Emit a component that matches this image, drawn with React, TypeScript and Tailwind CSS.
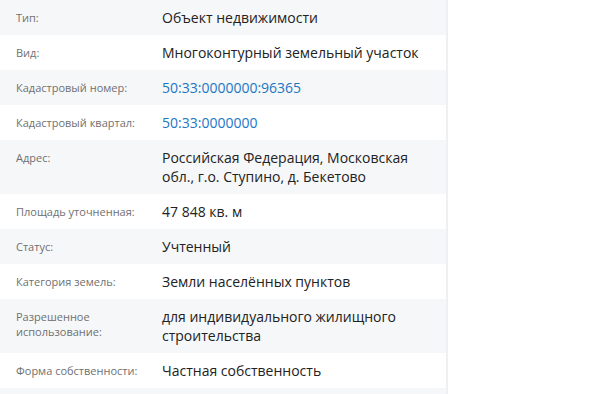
type Row = {
  label: string;
  value: string;
  link?: boolean;
};

const rows: Row[] = [
  { label: 'Тип:', value: 'Объект недвижимости' },
  { label: 'Вид:', value: 'Многоконтурный земельный участок' },
  { label: 'Кадастровый номер:', value: '50:33:0000000:96365', link: true },
  { label: 'Кадастровый квартал:', value: '50:33:0000000', link: true },
  { label: 'Адрес:', value: 'Российская Федерация, Московская обл., г.о. Ступино, д. Бекетово' },
  { label: 'Площадь уточненная:', value: '47 848 кв. м' },
  { label: 'Статус:', value: 'Учтенный' },
  { label: 'Категория земель:', value: 'Земли населённых пунктов' },
  { label: 'Разрешенное использование:', value: 'для индивидуального жилищного строительства' },
  { label: 'Форма собственности:', value: 'Частная собственность' },
  { label: '', value: '' },
];

export default function App() {
  return (
    <div className="w-[606px] h-[394px] overflow-hidden bg-white font-['Open_Sans','Noto_Sans',sans-serif]">
      <div className="w-[448px] h-full border-r-2 border-[#eef0f3]">
        {rows.map((row, i) => (
          <div
            key={i}
            className={`flex items-start pt-2 pb-2 min-h-[35px] ${i % 2 === 0 ? 'bg-[#f6f7f9]' : 'bg-white'}`}
          >
            <div className="w-[162px] shrink-0 pl-4 pr-6 pt-[2px] text-[11px] leading-[15px] text-[#707070]">
              {row.label}
            </div>
            <div
              className={`flex-1 pr-4 text-[14px] leading-[19px] ${row.link ? 'text-[#1b76c4]' : 'text-[#222222]'}`}
            >
              {row.value}
            </div>
          </div>
        ))}
      </div>
    </div>
  );
}
